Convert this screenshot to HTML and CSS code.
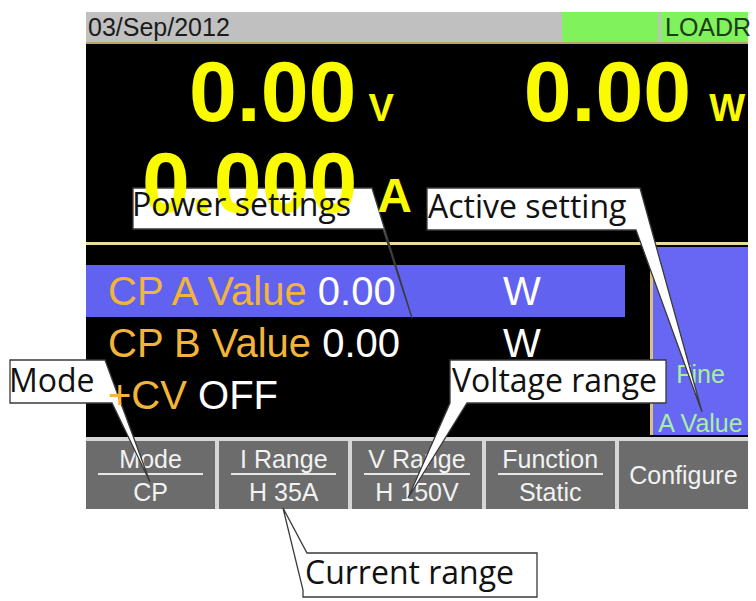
FILE: index.html
```html
<!DOCTYPE html>
<html lang="en">
<head>
    <meta charset="UTF-8">
    <meta name="viewport" content="width=device-width, initial-scale=1.0">
    <title>Electronic Load - CP Mode</title>
    <link rel="stylesheet" href="styles.css">
</head>
<body>
<div class="page">
    <div class="screen">
        <div class="status">
            <span class="date">03/Sep/2012</span>
            <span class="status-led"></span>
            <span class="status-mode">LOADR</span>
        </div>

        <div class="readout">
            <div class="readout-row">
                <span class="meter meter-v"><span class="num">0.00</span><span class="unit">V</span></span>
                <span class="meter meter-w"><span class="num">0.00</span><span class="unit unit-w">W</span></span>
            </div>
            <div class="readout-row row-a">
                <span class="meter"><span class="num">0.000</span><span class="unit unit-a">A</span></span>
            </div>
        </div>

        <div class="settings">
            <div class="param-list">
                <div class="param active">
                    <span><span class="param-name">CP A Value</span> 0.00</span>
                    <span>W</span>
                </div>
                <div class="param">
                    <span><span class="param-name">CP B Value</span> 0.00</span>
                    <span>W</span>
                </div>
                <div class="param">
                    <span><span class="param-name">+CV</span> OFF</span>
                </div>
            </div>
            <div class="side-panel">
                <div class="side-top">Fine</div>
                <div>A Value</div>
            </div>
        </div>

        <div class="softkeys">
            <div class="key">
                <div>Mode</div>
                <div class="key-rule"></div>
                <div>CP</div>
            </div>
            <div class="key">
                <div>I Range</div>
                <div class="key-rule"></div>
                <div>H 35A</div>
            </div>
            <div class="key">
                <div>V Range</div>
                <div class="key-rule"></div>
                <div>H 150V</div>
            </div>
            <div class="key">
                <div>Function</div>
                <div class="key-rule"></div>
                <div>Static</div>
            </div>
            <div class="key key-single">
                <div>Configure</div>
            </div>
        </div>
    </div>

    <!-- callout shapes, drawn over the screen -->
    <svg class="callouts" width="756" height="601" viewBox="0 0 756 601">
        <path d="M133,188 H372 L412,318 L383,229 H133 Z"/>
        <path d="M427,188 H640 L702,412 L636,230 H427 Z"/>
        <path d="M10,360 H105 L150,482 L112,403 H10 Z"/>
        <path d="M450,360 H666 V403 H467 L408,498 L450,403 Z"/>
        <path d="M283,508 L307,553 H537 V597 H303 V590 Z"/>
    </svg>

    <div class="callout-label label-power">Power settings</div>
    <div class="callout-label label-active">Active setting</div>
    <div class="callout-label label-mode">Mode</div>
    <div class="callout-label label-voltage">Voltage range</div>
    <div class="callout-label label-current">Current range</div>
</div>
</body>
</html>
```

FILE: styles.css
```css
body {
    margin: 0;
    background-color: #fff;
    font-family: "Liberation Sans", Arial, sans-serif;
}

.page {
    position: relative;
    width: 756px;
    height: 601px;
    overflow: hidden;
}

.screen {
    width: 662px;
    margin: 12px 0 0 86px;
}

/* top status bar */
.status {
    display: flex;
    height: 30px;
    background-color: #c0c0c0;
    border-bottom: 2px solid #b9a367;
    font-size: 25px;
    line-height: 30px;
    color: #1b1b1b;
}

.date {
    padding-left: 2px;
}

.status-led {
    width: 96px;
    margin-left: auto;
    background-color: #7ff25c;
}

.status-mode {
    width: 83px;
    margin-left: 3px;
    padding-left: 4px;
    background-color: #7ff25c;
    color: #1e3b1a;
    white-space: nowrap;
}

/* big meter readings */
.readout {
    height: 198px;
    box-sizing: border-box;
    padding-top: 4px;
    background-color: #000;
    color: #fafa00;
    font-weight: bold;
}

.readout-row {
    display: flex;
    align-items: baseline;
    height: 86px;
    line-height: 86px;
}

.meter {
    position: relative;
    z-index: 3;
}

.num {
    font-size: 86px;
}

.unit {
    font-size: 38px;
    margin-left: 12px;
}

.meter-v {
    margin-left: 103px;
}

.meter-w {
    margin-left: auto;
    margin-right: 3px;
}

.unit-w {
    margin-left: 18px;
}

.row-a {
    margin-top: 5px;
    padding-left: 56px;
}

.unit-a {
    font-size: 48px;
    margin-left: 20px;
}

/* parameter list */
.settings {
    display: flex;
    height: 195px;
    box-sizing: border-box;
    background-color: #000;
    border-top: 3px solid #eadb9f;
}

.param-list {
    flex: 1;
    padding-top: 20px;
}

.param {
    display: grid;
    grid-template-columns: 395px auto;
    width: 539px;
    box-sizing: border-box;
    padding-left: 22px;
    font-size: 40px;
    line-height: 52px;
    color: #fff;
    white-space: nowrap;
}

.param > span {
    position: relative;
    z-index: 3;
}

.param.active {
    background-color: #6262f0;
}

.param-name {
    color: #f2b53a;
}

.side-panel {
    width: 95px;
    margin: 2px 0;
    border-left: 3px solid #d9c283;
    background-color: #6767f3;
    display: flex;
    flex-direction: column;
    justify-content: flex-end;
    text-align: center;
    color: #a6f0a0;
    font-size: 25px;
    line-height: 24px;
    white-space: nowrap;
}

.side-top {
    margin-bottom: 25px;
}

/* soft keys */
.softkeys {
    display: flex;
    gap: 4px;
    padding-top: 4px;
    background-color: #d6d6d6;
}

.key {
    flex: 1;
    height: 68px;
    box-sizing: border-box;
    padding: 6px 0 5px;
    display: flex;
    flex-direction: column;
    text-align: center;
    background-color: #6c6c6c;
    color: #f2f2f2;
    font-size: 25px;
    line-height: 24px;
    white-space: nowrap;
}

.key-rule {
    height: 2px;
    margin: 2px 12px 5px;
    background-color: #e6e6e6;
}

.key-single {
    justify-content: center;
    padding: 0;
}

/* callouts */
.callouts {
    position: absolute;
    left: 0;
    top: 0;
    z-index: 2;
}

.callouts path {
    fill: #fff;
    stroke: #3a3a3a;
    stroke-width: 1.3;
    stroke-linejoin: miter;
}

.callout-label {
    position: absolute;
    z-index: 4;
    font-family: "Open Sans", sans-serif;
    font-size: 32px;
    line-height: 40px;
    color: #111;
    white-space: nowrap;
}

.label-power {
    left: 132px;
    top: 184px;
}

.label-active {
    left: 428px;
    top: 186px;
}

.label-mode {
    left: 9px;
    top: 360px;
}

.label-voltage {
    left: 452px;
    top: 360px;
}

.label-current {
    left: 305px;
    top: 552px;
}
```
